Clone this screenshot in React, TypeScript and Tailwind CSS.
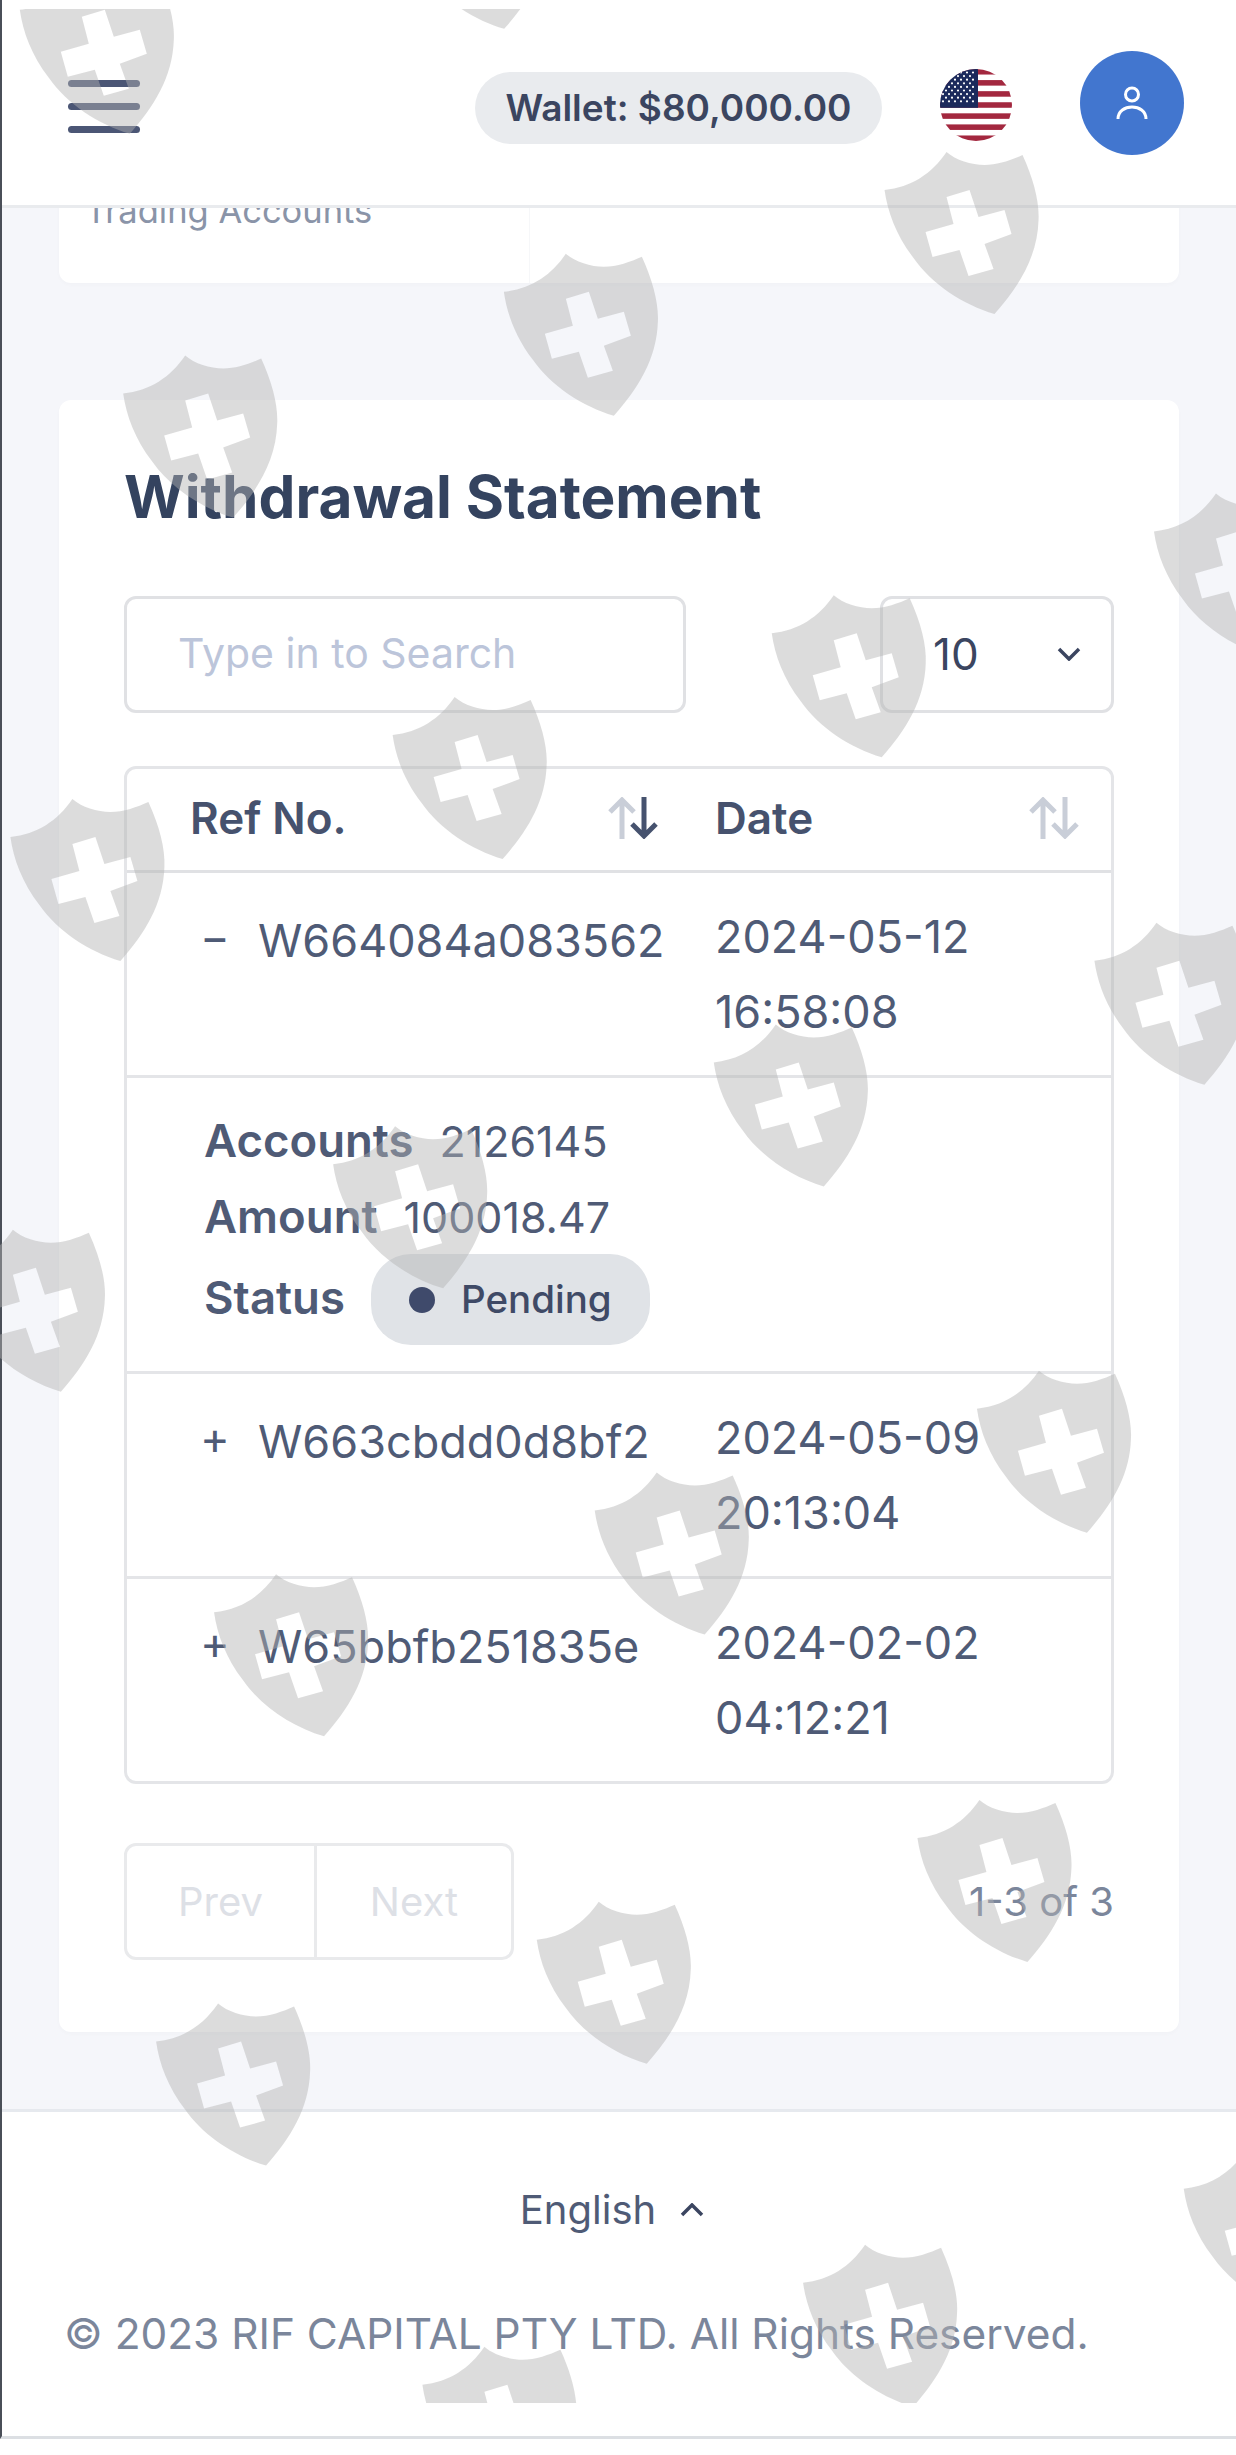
import React from "react";

const SHIELDS = [
  [12, -18], [251, -85], [564, 97], [321, 162], [78, 227], [736, 315], [492, 380], [250, 445],
  [6, 510], [698, 589], [455, 654], [212, 719], [-32, 785], [623, 875], [379, 940], [136, 1005],
  [585, 1149], [342, 1214], [99, 1279], [755, 1373], [512, 1433], [269, 1498],
];

// everything was read off the shrunk picture, so scale it back up
const SCALE = 1236 / 789;

function Watermarks() {
  return (
    <svg className="absolute left-0 top-[9px] z-20 pointer-events-none" width="1236" height="2394" viewBox="0 9 1236 2394">
      {SHIELDS.map(([x, y], i) => (
        <path
          key={i}
          transform={`translate(${x * SCALE} ${y * SCALE})`}
          fill="#b2b2b2"
          fillOpacity="0.46"
          fillRule="evenodd"
          d="M63 0C72 8 88 13 101 13C114 13 128 8 139 3C150 27 156 50 155 68C154 105 135 135 111 162C80 153 48 132 30 106C13 84 4 60 1 38C28 35 48 22 63 0ZM63 45L86 38L95 65L121 58L128 82L101 92L110 117L85 124L76 98L49 105L42 80L70 72Z"
        />
      ))}
    </svg>
  );
}

function Flag() {
  const stars: number[][] = [];
  for (let r = 0; r < 9; r++) {
    const n = r % 2 === 0 ? 6 : 5;
    for (let c = 0; c < n; c++) {
      stars.push([3 + (r % 2 === 0 ? 0 : 3) + c * 6, 3.5 + r * 3.6]);
    }
  }
  return (
    <svg width="72" height="72" viewBox="0 0 72 72" className="shrink-0">
      <defs>
        <clipPath id="flag-circle">
          <circle cx="36" cy="36" r="36" />
        </clipPath>
      </defs>
      <g clipPath="url(#flag-circle)">
        <rect width="72" height="72" fill="#fff" />
        {[0, 2, 4, 6, 8, 10, 12].map((i) => (
          <rect key={i} x="0" y={i * 5.54} width="72" height="5.54" fill="#a3283f" />
        ))}
        <rect width="38" height="38.8" fill="#1c2a5c" />
        {stars.map(([x, y], i) => (
          <circle key={i} cx={x} cy={y} r="1.1" fill="#fff" />
        ))}
      </g>
    </svg>
  );
}

function SortIcon({ active }: { active?: boolean }) {
  return (
    <svg width="50" height="42" viewBox="0 0 50 42" fill="none" strokeWidth="5" className="shrink-0">
      <path d="M14 42V3M2 15L14 3L26 15" stroke="#c9ced8" />
      <path d="M36 0V39M24 27L36 39L48 27" stroke={active ? "#46526e" : "#c9ced8"} />
    </svg>
  );
}

function Row({ sign, id, date, time, last }: { sign: string; id: string; date: string; time: string; last?: boolean }) {
  return (
    <div className={`flex border-[#e4e5e8] ${last ? "h-[202px]" : "h-[205px] border-b-[3px]"}`}>
      <div className="flex w-[588px] shrink-0 items-start pl-[73px] pt-[44px] text-[45px] leading-[48px] text-[#4f5b76]">
        <span className="w-[58px] shrink-0 -mt-1">{sign}</span>
        <span>{id}</span>
      </div>
      <div className="pt-[26px] text-[45px] leading-[75px] text-[#4f5b76]">
        <div>{date}</div>
        <div>{time}</div>
      </div>
    </div>
  );
}

export default function App() {
  return (
    <div className="relative h-[2455px] w-[1236px] overflow-hidden bg-white font-['Inter',sans-serif]">
      <Watermarks />
      <div className="h-[2439px] border-b-[3px] border-l-2 border-[#dcdfe3] border-l-[#4a4f58] bg-[#f5f6fa]">
        {/* top bar */}
        <header className="relative z-10 flex h-[208px] items-start border-b-[3px] border-[#e9ebee] bg-white">
          <button className="ml-[66px] mt-[80px] flex w-[72px] flex-col gap-[16px]">
            <span className="h-[7px] rounded-full bg-[#4b5675]" />
            <span className="h-[7px] rounded-full bg-[#4b5675]" />
            <span className="h-[7px] rounded-full bg-[#4b5675]" />
          </button>
          <div className="ml-auto mr-[52px] mt-[51px] flex items-start">
            <div className="mt-[21px] flex h-[72px] w-[407px] items-center justify-center rounded-full bg-[#e9ebee] text-[37px] font-semibold text-[#3b4560]">
              Wallet: $80,000.00
            </div>
            <div className="ml-[58px] mt-[18px]">
              <Flag />
            </div>
            <div className="ml-[68px] flex size-[104px] items-center justify-center rounded-full bg-[#4276cf]">
              <svg width="32" height="34" viewBox="0 0 32 34" fill="none" stroke="#fff" strokeWidth="3">
                <circle cx="16" cy="8.5" r="6.5" />
                <path d="M2 33C2 25 9 21 16 21C23 21 30 25 30 33" />
              </svg>
            </div>
          </div>
        </header>

        <main className="px-[57px]">
          {/* bottom of the card above, scrolled under the bar */}
          <div className="-mt-[23px] flex h-[98px] rounded-b-xl bg-white shadow-[0_2px_4px_rgba(0,0,0,0.02)]">
            <div className="w-[471px] border-r border-[#f6f7f9] pl-[26px] text-[34.5px] text-[#8a94a8]">Trading Accounts</div>
          </div>

          <section className="mt-[117px] h-[1632px] rounded-xl bg-white px-[65px] pt-[63px] shadow-[0_2px_4px_rgba(0,0,0,0.02)]">
            <h2 className="text-[58.5px] leading-[68px] font-bold text-[#34435f]">Withdrawal Statement</h2>

            <div className="mt-[65px] flex justify-between">
              <div className="flex h-[117px] w-[562px] items-center rounded-xl border-[3px] border-[#e0e1e4] pb-[2px] pl-[51px] text-[41px] text-[#bcc5da]">
                Type in to Search
              </div>
              <div className="flex h-[117px] w-[234px] items-center justify-between rounded-xl border-[3px] border-[#e0e1e4] pb-[2px] pl-[50px] pr-[30px] text-[44px] text-[#3b4560]">
                10
                <svg width="24" height="14" viewBox="0 0 24 14" fill="none" stroke="#3b4560" strokeWidth="3.5">
                  <path d="M2 2L12 12L22 2" />
                </svg>
              </div>
            </div>

            <div className="mt-[53px] rounded-xl border-[3px] border-[#e4e5e8]">
              <div className="flex h-[104px] items-center border-b-[3px] border-[#e0e1e4] pb-[3px] text-[44px] font-semibold text-[#46526e]">
                <div className="flex w-[588px] shrink-0 items-center justify-between pl-[63px] pr-[57px]">
                  Ref No.
                  <SortIcon active />
                </div>
                <div className="flex flex-1 items-center justify-between pr-[32px]">
                  Date
                  <SortIcon />
                </div>
              </div>

              <Row sign="−" id="W664084a083562" date="2024-05-12" time="16:58:08" />

              <div className="h-[296px] border-b-[3px] border-[#e4e5e8] pl-[77px] pt-[25px] text-[43px] leading-[75px] text-[#4f5b76]">
                <div className="flex items-baseline gap-[26px]">
                  <span className="text-[45.5px] font-semibold">Accounts</span>
                  <span>2126145</span>
                </div>
                <div className="flex items-baseline gap-[26px]">
                  <span className="text-[45.5px] font-semibold">Amount</span>
                  <span>100018.47</span>
                </div>
                <div className="-mt-[1px] flex items-center gap-[26px]">
                  <span className="-mt-[4px] text-[45.5px] font-semibold">Status</span>
                  <span className="flex h-[91px] w-[279px] items-center gap-[26px] rounded-[40px] bg-[#e0e3e7] pl-[38px] text-[38.5px] font-medium text-[#3f4a66]">
                    <span className="size-[26px] rounded-full bg-[#3f4a6b]" />
                    Pending
                  </span>
                </div>
              </div>

              <Row sign="+" id="W663cbdd0d8bf2" date="2024-05-09" time="20:13:04" />
              <Row sign="+" id="W65bbfb251835e" date="2024-02-02" time="04:12:21" last />
            </div>

            <div className="mt-[59px] flex items-center justify-between">
              <div className="flex h-[117px] w-[390px] rounded-xl border-[3px] border-[#e9eaec] text-[40px] text-[#dde0e6]">
                <div className="flex w-[190px] items-center justify-center border-r-[3px] border-[#e9eaec]">Prev</div>
                <div className="flex flex-1 items-center justify-center">Next</div>
              </div>
              <div className="text-[40px] text-[#7b869b]">1-3 of 3</div>
            </div>
          </section>
        </main>

        <footer className="mt-[77px] h-[327px] border-t-[3px] border-[#e6e9ee] bg-white">
          <div className="flex items-center justify-center gap-[24px] pr-[14px] pt-[66px] text-[40px] leading-[64px] text-[#4f5b76]">
            English
            <svg width="24" height="14" viewBox="0 0 24 14" fill="none" stroke="#3b4560" strokeWidth="3.5">
              <path d="M2 12L12 2L22 12" />
            </svg>
          </div>
          <div className="ml-[62px] mt-[60px] whitespace-nowrap text-[42.4px] leading-[64px] text-[#7b869b]">
            © 2023 RIF CAPITAL PTY LTD. All Rights Reserved.
          </div>
        </footer>
      </div>
    </div>
  );
}
